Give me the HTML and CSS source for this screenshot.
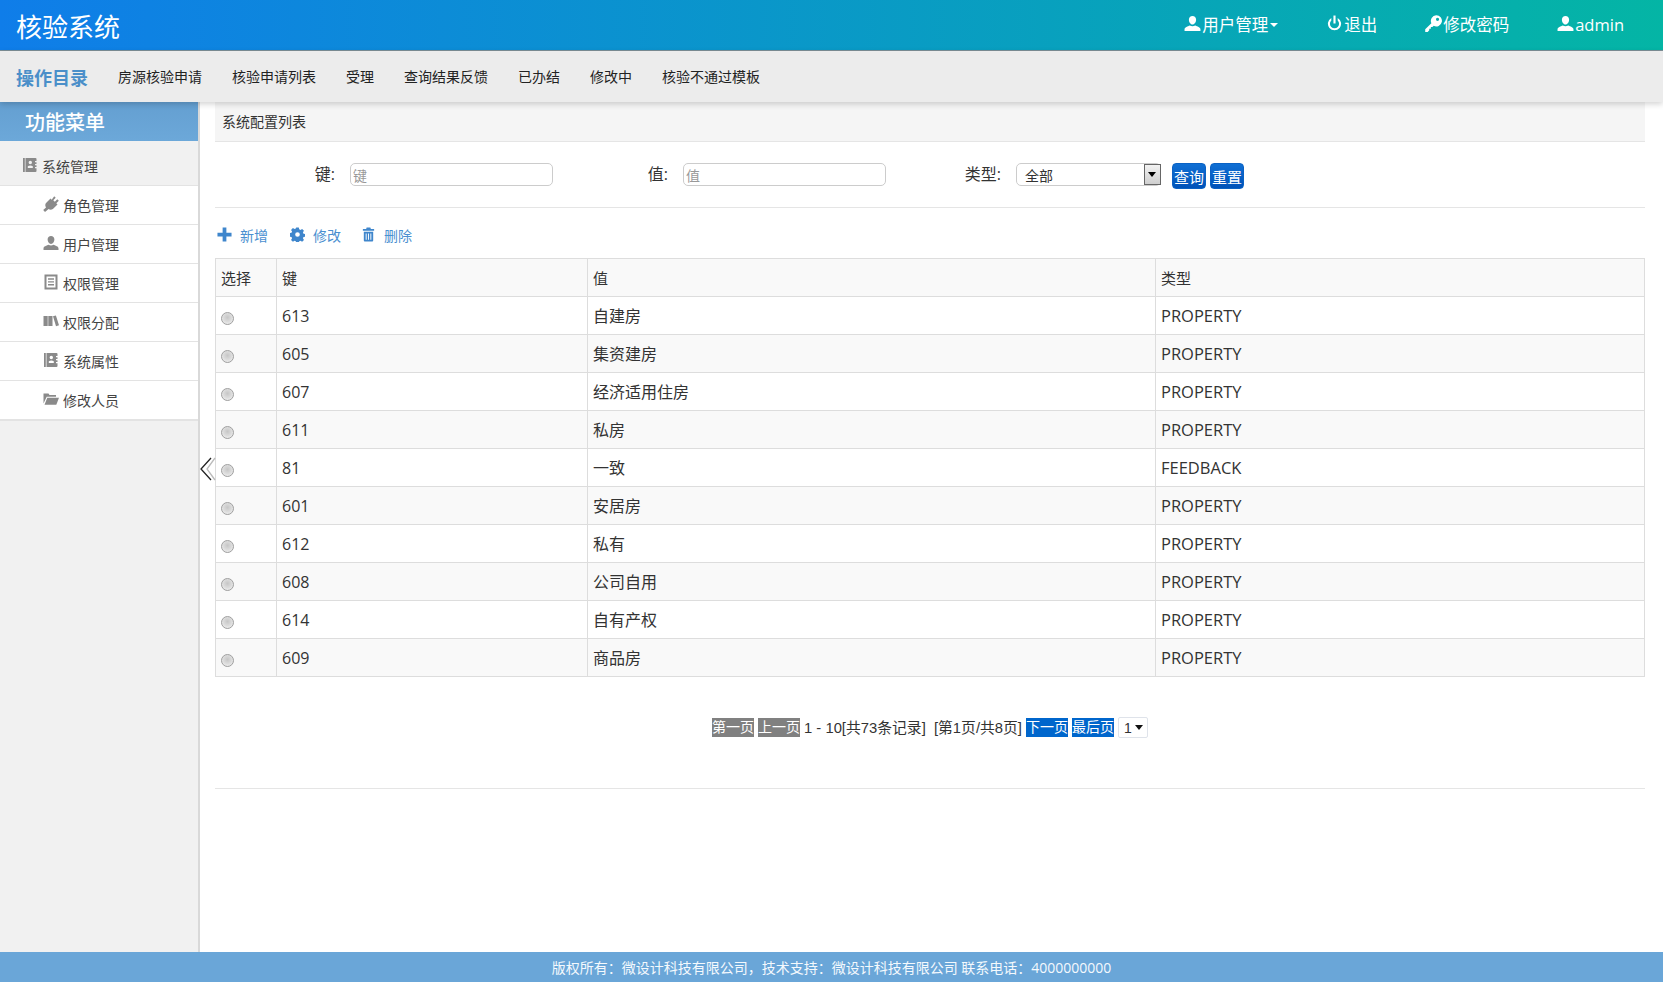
FILE: index.html
```html
<!DOCTYPE html>
<html lang="zh-CN">
<head>
    <meta charset="UTF-8">
    <title>核验系统</title>
    <link rel="stylesheet" href="styles.css">
</head>
<body>
    <svg class="sprite" xmlns="http://www.w3.org/2000/svg">
        <symbol id="i-user" viewBox="0 0 16 16"><path d="M8 1c2 0 3.400 1.400 3.400 3.500S10 9 8 9 4.600 6.600 4.600 4.500 6 1 8 1zM0.500 15v-1.600C0.500 11.500 3.500 10.600 5.500 9.800c1.500 1 3.500 1 5 0 2 .8 5 1.700 5 3.600V15z"/></symbol>
        <symbol id="i-power" viewBox="0 0 16 16"><path d="M7 0.500h2v7.500H7z"/><path d="M5 2.800v2.400a4.300 4.300 0 1 0 6 0V2.800a6.200 6.200 0 1 1-6 0z"/></symbol>
        <symbol id="i-key" viewBox="0 0 16 16"><path fill-rule="evenodd" d="M10.500 0.200a5.300 5.300 0 1 1-2.300 10L7 11.400H5.500v1.500H4v1.500L2.500 15.900H0.200v-2.400l5.800-5.800a5.300 5.300 0 0 1 4.500-7.500zM11.800 2.600a1.500 1.500 0 1 0 0 3 1.500 1.500 0 0 0 0-3z"/></symbol>
        <symbol id="i-contact" viewBox="0 0 16 16"><path fill-rule="evenodd" d="M1 1h1.800v14H1zM3.500 1h10a1 1 0 0 1 1 1v2H13v1.200h1.500V7H13v1.200h1.500V10H13v1.200h1.500V14a1 1 0 0 1-1 1h-10zM8.300 3.800a1.700 1.700 0 1 0 0 3.400 1.700 1.700 0 0 0 0-3.400zM5.800 9.200v1.800h5V9.200c-1.400-.9-3.600-.9-5 0z"/></symbol>
        <symbol id="i-plug" viewBox="0 0 16 16"><path d="M11.200 0.200l1.500 1.500-2.400 2.500 1.500 1.500 2.500-2.400 1.500 1.500-2.500 2.400 1.200 1.200-4.600 4.500c-1.400 1-3.100 1-4.300.1L2 15.900 0.200 14l2.800-2.600c-.9-1.300-1-3 0-4.300l4.500-4.600 1.200 1.200z"/></symbol>
        <symbol id="i-list" viewBox="0 0 16 16"><path fill-rule="evenodd" d="M1.500 0.500h13v15h-13zM3.500 2.500v11h9v-11zM5 4.300h6v1.400H5zM5 7.200h6v1.400H5zM5 10.100h6v1.400H5z"/></symbol>
        <symbol id="i-books" viewBox="0 0 16 16"><path d="M0.500 3h4.200v10H0.500zM5.300 3h4.200v10H5.300zM10 3.300l2.900-.8 3.100 9.800-3 .9z"/></symbol>
        <symbol id="i-folder" viewBox="0 0 16 16"><path d="M0.500 2.500h5l1 1.500H13v1.800H3.700L0.500 12.500z"/><path d="M4.300 6.800H16l-2.700 7H1.500z"/></symbol>
        <symbol id="i-plus" viewBox="0 0 16 16"><path d="M6 0.500h4v5.500h5.500v4H10v5.500H6V10H0.500V6H6z"/></symbol>
        <symbol id="i-cog" viewBox="0 0 16 16"><path fill-rule="evenodd" d="M6.600 0.500h2.800l.4 2 1.400.6 1.700-1.100 2 2-1.100 1.700.6 1.400 2 .4v2.800l-2 .4-.6 1.400 1.100 1.700-2 2-1.700-1.100-1.400.6-.4 2H6.600l-.4-2-1.400-.6-1.700 1.100-2-2 1.100-1.700-.6-1.400-2-.4V6.600l2-.4.6-1.400L1.100 3.100l2-2 1.700 1.100 1.400-.6zM8 5.500a2.500 2.500 0 1 0 0 5 2.500 2.500 0 0 0 0-5z"/></symbol>
        <symbol id="i-trash" viewBox="0 0 16 16"><path fill-rule="evenodd" d="M6 0.500h4l.5 1.500H14v2H2V2h3.500zM3 5h10v9.500a1 1 0 0 1-1 1H4a1 1 0 0 1-1-1zM5 7v6.500h1V7zM7.500 7v6.500h1V7zM10 7v6.500h1V7z"/></symbol>
    </svg>

    <header class="topbar">
        <div class="brand">核验系统</div>
        <nav class="top-links">
            <a class="top-link"><svg class="top-icon"><use href="#i-user"/></svg>用户管理<span class="caret"></span></a>
            <a class="top-link"><svg class="top-icon"><use href="#i-power"/></svg>退出</a>
            <a class="top-link"><svg class="top-icon"><use href="#i-key"/></svg>修改密码</a>
            <a class="top-link"><svg class="top-icon"><use href="#i-user"/></svg>admin</a>
        </nav>
    </header>

    <nav class="subnav">
        <strong class="subnav-title">操作目录</strong>
        <a>房源核验申请</a>
        <a>核验申请列表</a>
        <a>受理</a>
        <a>查询结果反馈</a>
        <a>已办结</a>
        <a>修改中</a>
        <a>核验不通过模板</a>
    </nav>

    <div class="layout">
        <aside class="sidebar">
            <div class="sidebar-title">功能菜单</div>
            <div class="menu-head"><svg class="menu-icon"><use href="#i-contact"/></svg>系统管理</div>
            <ul class="menu">
                <li><svg class="menu-icon"><use href="#i-plug"/></svg>角色管理</li>
                <li><svg class="menu-icon"><use href="#i-user"/></svg>用户管理</li>
                <li><svg class="menu-icon"><use href="#i-list"/></svg>权限管理</li>
                <li><svg class="menu-icon"><use href="#i-books"/></svg>权限分配</li>
                <li><svg class="menu-icon"><use href="#i-contact"/></svg>系统属性</li>
                <li><svg class="menu-icon"><use href="#i-folder"/></svg>修改人员</li>
            </ul>
            <svg class="collapse" viewBox="0 0 16 24"><path class="collapse-back" d="M15 1L7 12l8 11"/><path class="collapse-front" d="M11 1L1 12l10 11"/></svg>
        </aside>

        <main class="content">
            <div class="content-title">系统配置列表</div>

            <form class="search">
                <div class="search-field">
                    <label for="key">键:</label>
                    <input type="text" id="key" placeholder="键">
                </div>
                <div class="search-field">
                    <label for="val">值:</label>
                    <input type="text" id="val" placeholder="值">
                </div>
                <div class="search-field">
                    <label>类型:</label>
                    <div class="type-select">全部<span class="type-arrow"></span></div>
                </div>
                <div class="search-buttons">
                    <button type="button">查询</button>
                    <button type="button">重置</button>
                </div>
            </form>

            <div class="toolbar">
                <a><svg class="tool-icon"><use href="#i-plus"/></svg>新增</a>
                <a><svg class="tool-icon"><use href="#i-cog"/></svg>修改</a>
                <a class="tool-delete"><svg class="tool-icon"><use href="#i-trash"/></svg>删除</a>
            </div>

            <table class="data-table">
                <colgroup>
                    <col class="col-pick">
                    <col class="col-key">
                    <col class="col-val">
                    <col>
                </colgroup>
                <tbody>
                    <tr class="head"><td>选择</td><td>键</td><td>值</td><td>类型</td></tr>
                    <tr><td><input type="radio" name="row"></td><td>613</td><td>自建房</td><td>PROPERTY</td></tr>
                    <tr><td><input type="radio" name="row"></td><td>605</td><td>集资建房</td><td>PROPERTY</td></tr>
                    <tr><td><input type="radio" name="row"></td><td>607</td><td>经济适用住房</td><td>PROPERTY</td></tr>
                    <tr><td><input type="radio" name="row"></td><td>611</td><td>私房</td><td>PROPERTY</td></tr>
                    <tr><td><input type="radio" name="row"></td><td>81</td><td>一致</td><td>FEEDBACK</td></tr>
                    <tr><td><input type="radio" name="row"></td><td>601</td><td>安居房</td><td>PROPERTY</td></tr>
                    <tr><td><input type="radio" name="row"></td><td>612</td><td>私有</td><td>PROPERTY</td></tr>
                    <tr><td><input type="radio" name="row"></td><td>608</td><td>公司自用</td><td>PROPERTY</td></tr>
                    <tr><td><input type="radio" name="row"></td><td>614</td><td>自有产权</td><td>PROPERTY</td></tr>
                    <tr><td><input type="radio" name="row"></td><td>609</td><td>商品房</td><td>PROPERTY</td></tr>
                </tbody>
            </table>

            <div class="pager">
                <a class="page-btn off">第一页</a>
                <a class="page-btn off">上一页</a>
                <span class="page-info">1 - 10[共73条记录]&nbsp;&nbsp;[第1页/共8页]</span>
                <a class="page-btn">下一页</a>
                <a class="page-btn">最后页</a>
                <div class="page-select">1<span class="page-arrow"></span></div>
            </div>

            <hr class="rule">
        </main>
    </div>

    <footer class="footer">版权所有：微设计科技有限公司，技术支持：微设计科技有限公司 联系电话：4000000000</footer>
</body>
</html>
```

FILE: styles.css
```css
* {
    box-sizing: border-box;
}
html, body {
    height: 100%;
}
body {
    margin: 0;
    display: flex;
    flex-direction: column;
    font-family: "Open Sans", "Noto Sans CJK SC", sans-serif;
    font-size: 14px;
    color: #333;
    background: #fff;
    overflow: hidden;
}
.sprite {
    display: none;
}

/* top bar */
.topbar {
    height: 51px;
    flex: none;
    display: flex;
    justify-content: space-between;
    align-items: center;
    padding: 0 39px 0 16px;
    background: linear-gradient(90deg, #0f7de9, #04b5a5);
    border-bottom: 1px solid #7d8f96;
    color: #fff;
}
.brand {
    padding-top: 3px;
    font-size: 26px;
    line-height: 48px;
}
.top-links {
    display: flex;
    gap: 48px;
}
.top-link {
    display: flex;
    align-items: center;
    font-size: 16.5px;
    line-height: 50px;
}
.top-icon {
    width: 17px;
    height: 17px;
    margin: -4px 1px 0 0;
    fill: #fff;
}
.caret {
    width: 0;
    height: 0;
    margin-left: 2px;
    border-top: 4px solid #fff;
    border-left: 4px solid transparent;
    border-right: 4px solid transparent;
}

/* second bar */
.subnav {
    height: 51px;
    flex: none;
    position: relative;
    z-index: 2;
    display: flex;
    align-items: center;
    gap: 30px;
    padding: 0 0 2px 16px;
    background: #ececec;
    box-shadow: 0 2px 6px rgba(0, 0, 0, 0.18);
    color: #222;
}
.subnav-title {
    padding-top: 2px;
    font-size: 18px;
    color: #4a8fc9;
}

.layout {
    flex: 1;
    display: flex;
    min-height: 0;
}

/* sidebar */
.sidebar {
    width: 200px;
    flex: none;
    position: relative;
    background: #f1f1f1;
    border-right: 2px solid #d9d9d9;
    color: #444;
}
.sidebar-title {
    height: 39px;
    padding-left: 25px;
    background: linear-gradient(#649fd1, #6ca8d9);
    color: #fff;
    font-size: 20px;
    font-weight: 500;
    line-height: 41px;
}
.menu-head {
    height: 45px;
    display: flex;
    align-items: center;
    padding: 6px 0 0 22px;
    border-bottom: 1px solid #e3e3e3;
}
.menu {
    list-style: none;
    margin: 0;
    padding: 0;
    background: #fff;
    border-bottom: 2px solid #e3e3e3;
}
.menu li {
    height: 39px;
    display: flex;
    align-items: center;
    padding-left: 43px;
    border-bottom: 1px solid #e3e3e3;
}
.menu li:last-child {
    height: 38px;
    border-bottom: 0;
}
.menu-icon {
    width: 16px;
    height: 16px;
    margin: -2px 4px 0 0;
    fill: #8a8a8a;
}
.collapse {
    position: absolute;
    top: 355px;
    left: 200px;
    width: 16px;
    height: 24px;
    fill: none;
}
.collapse-front {
    stroke: #222;
    stroke-width: 1.3;
}
.collapse-back {
    stroke: #bbb;
    stroke-width: 1.3;
}

/* main area */
.content {
    flex: 1;
    min-width: 0;
    margin: 0 18px 0 15px;
}
.content-title {
    height: 40px;
    padding-left: 7px;
    background: #f5f5f5;
    border-bottom: 1px solid #e5e5e5;
    line-height: 39px;
}
.search {
    height: 66px;
    display: flex;
    align-items: flex-start;
    padding: 21px 0 0 5px;
    border-bottom: 1px solid #e5e5e5;
}
.search-field {
    display: flex;
    align-items: flex-start;
}
.search-field label {
    width: 130px;
    padding-right: 15px;
    text-align: right;
    font-size: 16px;
    line-height: 23px;
}
.search-field input {
    width: 203px;
    height: 23px;
    padding: 2px 2px 0;
    border: 1px solid #ccc;
    border-radius: 5px;
    font-family: inherit;
    font-size: 14px;
    outline: 0;
}
.search-field input::placeholder {
    color: #999;
}
.type-select {
    width: 145px;
    height: 23px;
    position: relative;
    padding-left: 8px;
    border: 1px solid #ccc;
    border-radius: 5px;
    font-size: 14px;
    line-height: 24px;
}
.type-arrow {
    position: absolute;
    top: 0;
    right: -1px;
    width: 17px;
    height: 21px;
    background: linear-gradient(#f2f2f2, #cfcfcf);
    border: 1px solid #666;
}
.type-arrow::after {
    content: "";
    position: absolute;
    top: 7px;
    left: 3px;
    border-top: 5px solid #000;
    border-left: 4px solid transparent;
    border-right: 4px solid transparent;
}
.search-buttons {
    display: flex;
    gap: 4px;
    margin-left: 11px;
}
.search-buttons button {
    width: 34px;
    height: 26px;
    padding: 0;
    background: linear-gradient(#0f6fd4, #0052b8);
    border: 1px solid #0a62c4;
    border-radius: 4px;
    color: #fff;
    font-family: inherit;
    font-size: 15px;
}

.toolbar {
    height: 50px;
    display: flex;
    align-items: center;
    gap: 22px;
    padding: 3px 0 0 2px;
    color: #4a8fd0;
}
.toolbar a {
    display: flex;
    align-items: center;
}
.tool-icon {
    width: 15px;
    height: 15px;
    margin-right: 8px;
    fill: #3f86cc;
}
.tool-delete {
    margin-left: -2px;
}

/* table */
.data-table {
    width: 100%;
    table-layout: fixed;
    border-collapse: collapse;
    border: 1px solid #ddd;
    font-size: 16px;
}
.col-pick {
    width: 61px;
}
.col-key {
    width: 311px;
}
.col-val {
    width: 568px;
}
.data-table td {
    height: 38px;
    padding: 0 5px;
    border: 1px solid #ddd;
    line-height: 20px;
}
.data-table td:last-child {
    font-size: 16.5px;
}
.data-table tr:nth-child(odd) {
    background: #f9f9f9;
}
.data-table .head td {
    font-size: 15px;
}
.data-table input {
    appearance: none;
    display: block;
    width: 13px;
    height: 13px;
    margin: 6px 0 0;
    border: 1px solid #a0a0a0;
    border-radius: 50%;
    background: radial-gradient(circle at 50% 40%, #c6c6c6 0, #dcdcdc 50%, #f6f6f6 100%);
}

/* pagination */
.pager {
    display: flex;
    justify-content: center;
    align-items: center;
    gap: 4px;
    margin-top: 40px;
    font-family: "Liberation Sans", "Noto Sans CJK SC", sans-serif;
    line-height: 20px;
}
.page-btn {
    width: 42px;
    height: 19px;
    background: #0066cc;
    color: #fff;
    line-height: 19px;
    text-align: center;
    white-space: nowrap;
}
.page-btn.off {
    background: #808080;
}
.page-info {
    font-size: 14.8px;
}
.page-select {
    width: 30px;
    height: 21px;
    position: relative;
    padding-left: 5px;
    border: 1px solid #dfe3ea;
    border-radius: 2px;
}
.page-arrow {
    position: absolute;
    top: 7px;
    right: 4px;
    border-top: 5px solid #111;
    border-left: 4px solid transparent;
    border-right: 4px solid transparent;
}
.rule {
    height: 1px;
    margin: 50px 0 0;
    border: 0;
    background: #e5e5e5;
}

.footer {
    height: 30px;
    flex: none;
    background: #6aa6d8;
    color: #f4f9fd;
    line-height: 31px;
    text-align: center;
}
```
